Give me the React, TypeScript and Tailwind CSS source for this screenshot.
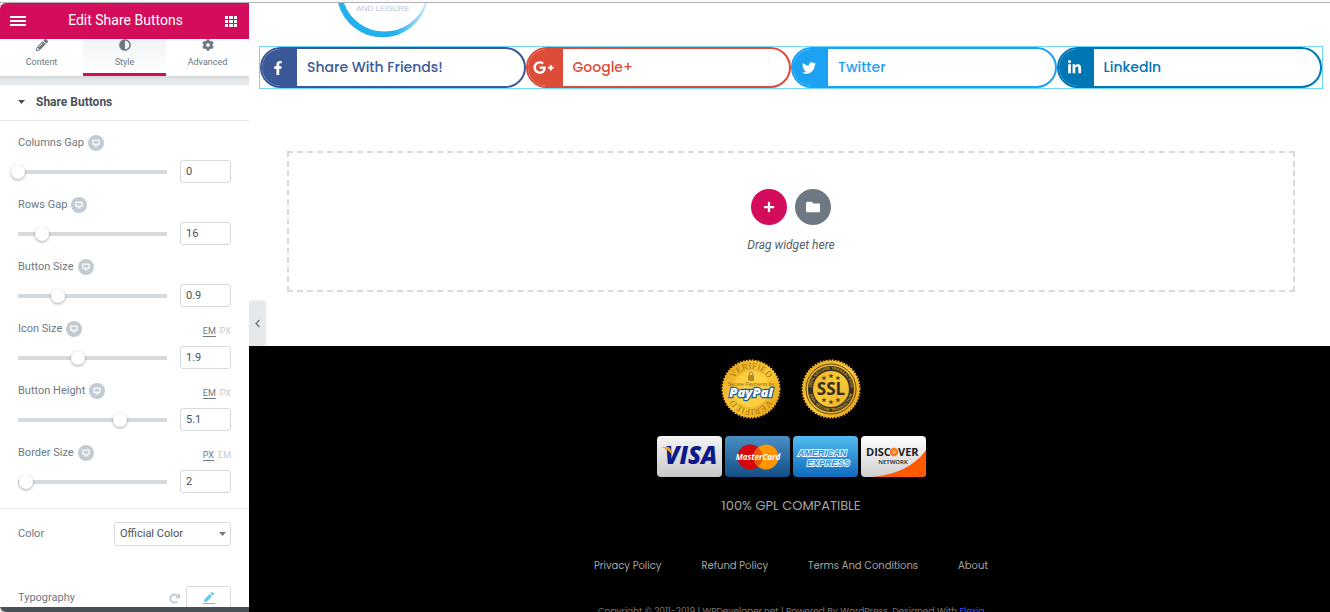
import { useState } from "react";
import type { ReactNode } from "react";
import {
  FaAdjust,
  FaChevronLeft,
  FaCog,
  FaFacebookF,
  FaFolder,
  FaGooglePlusG,
  FaLinkedinIn,
  FaPencilAlt,
  FaPlus,
  FaTwitter,
} from "react-icons/fa";

interface Control {
  id: string;
  label: string;
  value: number;
  min: number;
  max: number;
  step: number;
  units?: string[];
}

const CONTROLS: Control[] = [
  { id: "columns-gap", label: "Columns Gap", value: 0, min: 0, max: 100, step: 1 },
  { id: "rows-gap", label: "Rows Gap", value: 16, min: 0, max: 100, step: 1 },
  { id: "button-size", label: "Button Size", value: 0.9, min: 0.5, max: 2, step: 0.1 },
  { id: "icon-size", label: "Icon Size", value: 1.9, min: 0.5, max: 4, step: 0.1, units: ["EM", "PX"] },
  { id: "button-height", label: "Button Height", value: 5.1, min: 1, max: 7, step: 0.1, units: ["EM", "PX"] },
  { id: "border-size", label: "Border Size", value: 2, min: 1, max: 20, step: 1, units: ["PX", "EM"] },
];

const TABS = [
  { label: "Content", icon: <FaPencilAlt size={12} /> },
  { label: "Style", icon: <FaAdjust size={12} /> },
  { label: "Advanced", icon: <FaCog size={12} /> },
];

const NETWORKS = [
  { label: "Share With Friends!", icon: <FaFacebookF size={14} />, border: "border-[#3b5998]", bg: "bg-[#3b5998]", text: "text-[#3b5998]" },
  { label: "Google+", icon: <FaGooglePlusG size={21} />, border: "border-[#dd4b39]", bg: "bg-[#dd4b39]", text: "text-[#dd4b39]" },
  { label: "Twitter", icon: <FaTwitter size={14} />, border: "border-[#1da1f2]", bg: "bg-[#1da1f2]", text: "text-[#1da1f2]" },
  { label: "LinkedIn", icon: <FaLinkedinIn size={15} />, border: "border-[#0077b5]", bg: "bg-[#0077b5]", text: "text-[#0077b5]" },
];

const FOOTER_LINKS = ["Privacy Policy", "Refund Policy", "Terms And Conditions", "About"];

function DeviceButton() {
  return (
    <button aria-label="Desktop" className="flex size-4 shrink-0 items-center justify-center rounded-full bg-[#c2cbd2] text-white">
      <svg width="8" height="8" viewBox="0 0 8 8" fill="none" stroke="currentColor">
        <rect x="0.9" y="1.2" width="6.2" height="4" strokeWidth="1.2" />
        <path d="M2.5 6.8h3" strokeWidth="1.3" />
      </svg>
    </button>
  );
}

function SliderControl({ control }: { control: Control }) {
  const [value, setValue] = useState(String(control.value));

  return (
    <div className="flex flex-col gap-[9px]">
      <div className="flex h-4 items-center gap-1">
        <label htmlFor={control.id}>{control.label}</label>
        <DeviceButton />
        {control.units && (
          <div className="ml-auto flex gap-1 pt-1 text-[9px] leading-3 text-[#c2cbd2]">
            {control.units.map((unit, i) => (
              <button key={unit} className={i === 0 ? "text-[#6d7882] underline underline-offset-2" : ""}>
                {unit}
              </button>
            ))}
          </div>
        )}
      </div>
      <div className="-ml-[7px] flex items-center gap-[6px]">
        <input
          type="range"
          aria-label={`${control.label} slider`}
          min={control.min}
          max={control.max}
          step={control.step}
          value={Number(value)}
          onChange={(e) => setValue(e.target.value)}
          className="h-4 min-w-0 flex-1 appearance-none bg-[linear-gradient(#d5dadf,#d5dadf)] bg-[length:calc(100%-14px)_4px] bg-center bg-no-repeat [&::-webkit-slider-thumb]:size-3.5 [&::-webkit-slider-thumb]:appearance-none [&::-webkit-slider-thumb]:rounded-full [&::-webkit-slider-thumb]:bg-white [&::-webkit-slider-thumb]:shadow-[0_1px_3px_rgba(0,0,0,0.35)]"
        />
        <input
          id={control.id}
          value={value}
          onChange={(e) => setValue(e.target.value)}
          className="h-[23px] w-[51px] rounded-[3px] border border-[#d5dadf] px-[5px] text-[#495157] outline-none"
        />
      </div>
    </div>
  );
}

function Sidebar() {
  return (
    <aside className="flex w-[249px] shrink-0 flex-col overflow-hidden rounded-l-md bg-white font-['Roboto',sans-serif] text-[11px] text-[#6d7882]">
      <header className="flex h-9 shrink-0 items-center justify-between bg-[#d30c5c] pr-3 pl-2.5 text-white">
        <button aria-label="Menu">
          <svg width="16" height="12" viewBox="0 0 16 12" fill="currentColor">
            <path d="M0 1h16v2H0zM0 5h16v2H0zM0 9h16v2H0z" />
          </svg>
        </button>
        <h1 className="pb-0.5 text-[14px] leading-5">Edit Share Buttons</h1>
        <button aria-label="Widgets">
          <svg width="12" height="12" viewBox="0 0 12 12" fill="currentColor">
            <path d="M0 1h3v3H0zM4 1h4v3H4zM9 1h3v3H9zM0 5h3v3H0zM4 5h4v3H4zM9 5h3v3H9zM0 9h3v3H0zM4 9h4v3H4zM9 9h3v3H9z" />
          </svg>
        </button>
      </header>

      <nav className="z-10 grid h-[37px] shrink-0 grid-cols-3 bg-white text-[9px] leading-3 shadow-[0_1px_4px_rgba(0,0,0,0.12)]">
        {TABS.map((tab) => (
          <button
            key={tab.label}
            className={
              tab.label === "Style"
                ? "flex flex-col items-center justify-start gap-[5px] border-b-3 border-[#d30c5c] bg-linear-to-b from-[#f2f3f5] to-white"
                : "flex flex-col items-center justify-start gap-[5px] border-b-3 border-white"
            }
          >
            {tab.icon}
            {tab.label}
          </button>
        ))}
      </nav>

      <div className="h-[9px] shrink-0 bg-[#e6e9ec]" />

      <button className="flex h-9 shrink-0 items-center gap-[11px] border-b border-[#e6e9ec] px-[18px] pb-0.5 text-[12px] font-bold text-[#495157]">
        <svg width="7" height="4" viewBox="0 0 7 4" fill="currentColor">
          <path d="M0 0h7L3.500 4z" />
        </svg>
        Share Buttons
      </button>

      <div className="flex min-h-0 flex-1 flex-col overflow-hidden">
        <div className="flex shrink-0 flex-col gap-3.5 border-b border-[#e6e9ec] px-[18px] pt-3.5 pb-[15px]">
          {CONTROLS.map((control) => (
            <SliderControl key={control.id} control={control} />
          ))}
        </div>

        <div className="flex shrink-0 items-center justify-between px-[18px] pt-[13px]">
          <label htmlFor="color">Color</label>
          <div className="relative">
            <select
              id="color"
              className="h-6 w-[117px] appearance-none rounded-[3px] border border-[#d5dadf] bg-white pr-4 pl-[5px] text-[#495157] outline-none"
            >
              <option>Official Color</option>
              <option>Custom Color</option>
            </select>
            <svg width="7" height="4" viewBox="0 0 7 4" className="pointer-events-none absolute top-2.5 right-[5px] fill-[#6d7882]">
              <path d="M0 0h7L3.500 4z" />
            </svg>
          </div>
        </div>

        <div className="flex shrink-0 items-center px-[18px] pt-10">
          <span>Typography</span>
          <button aria-label="Reset typography" className="mr-1.5 ml-auto text-[#c2cbd2]">
            <svg width="11" height="11" viewBox="0 0 11 11">
              <path d="M8.300 8.300A4 4 0 1 1 8.500 3" fill="none" stroke="currentColor" strokeWidth="1.900" />
              <path d="M11 .3v4.900H6.100z" fill="currentColor" />
            </svg>
          </button>
          <button
            aria-label="Edit typography"
            className="flex h-6 w-[45px] items-center justify-center rounded-[3px] border border-[#d5dadf] text-[#5bc9f4]"
          >
            <svg width="12" height="12" viewBox="0 0 12 12" fill="currentColor">
              <path d="M1 10l.5-2.800L6.700 2l2.300 2.300L3.800 9.500zM7.400 1.300L8.500.300q.5-.4 1 0l1.200 1.200q.4.5 0 1L9.700 3.600z" />
              <path d="M0 11h12v1H0z" />
            </svg>
          </button>
        </div>
      </div>

      <div className="h-[5px] shrink-0 bg-[#495157]" />
    </aside>
  );
}

function BrandMark() {
  return (
    <svg width="100" height="37" viewBox="0 0 100 37" className="ml-[74px] block">
      <defs>
        <linearGradient id="ring" x1="0" x2="1">
          <stop offset="0" stopColor="#22b1ee" />
          <stop offset="0.65" stopColor="#22b1ee" />
          <stop offset="1" stopColor="#22b1ee" stopOpacity="0.25" />
        </linearGradient>
      </defs>
      <path d="M5-2A46 46 0 0 0 94-2L92-2A43 43 0 0 1 11-2z" fill="url(#ring)" transform="translate(0 2)" />
      <text x="50" y="8" textAnchor="middle" fontSize="8" fill="#b9c6dc" fontFamily="Liberation Sans">
        AND LEISURE
      </text>
    </svg>
  );
}

function Seal({ children }: { children: ReactNode }) {
  return (
    <svg width="60" height="60" viewBox="0 0 60 60">
      <defs>
        <linearGradient id="gold" x1="0" y1="0" x2="1" y2="1">
          <stop offset="0" stopColor="#e5a11b" />
          <stop offset="0.5" stopColor="#fccb38" />
          <stop offset="1" stopColor="#e09a16" />
        </linearGradient>
      </defs>
      <circle cx="30" cy="30" r="28.500" fill="url(#gold)" />
      <circle cx="30" cy="30" r="28.500" fill="none" stroke="#f0b429" strokeWidth="2" strokeDasharray="1.6 1.4" />
      {children}
    </svg>
  );
}

function PaypalSeal() {
  return (
    <Seal>
      <defs>
        <path id="seal-top" d="M10 30a20 20 0 0 1 40 0" />
        <path id="seal-bottom" d="M50 30a20 20 0 0 1-40 0" />
      </defs>
      <circle cx="30" cy="30" r="18" fill="#ffd84a" opacity="0.6" />
      <g fontFamily="Liberation Serif" fontSize="9" fill="#a8761a" textAnchor="middle">
        <text><textPath href="#seal-top" startOffset="50%">VERIFIED</textPath></text>
        <text><textPath href="#seal-bottom" startOffset="50%">VERIFIED</textPath></text>
      </g>
      <rect x="27" y="16" width="6" height="6" rx="1" fill="#b98a1e" />
      <path d="M28.500 16v-1.500a1.500 1.500 0 0 1 3 0V16" fill="none" stroke="#8d887a" />
      <text x="30" y="27" textAnchor="middle" fontFamily="Liberation Sans" fontSize="5" fill="#8d5f14">
        Secure Payments by
      </text>
      <text
        x="30" y="38" textAnchor="middle" fontFamily="Open Sans" fontWeight="800" fontStyle="italic" fontSize="13"
        fill="#fff" stroke="#1f5fa8" strokeWidth="2.500" paintOrder="stroke"
      >
        PayPal
      </text>
    </Seal>
  );
}

function SslSeal() {
  return (
    <Seal>
      <defs>
        <path id="ssl-top" d="M10.500 30a19.500 19.500 0 0 1 39 0" />
        <path id="ssl-bottom" d="M8 30a22 22 0 0 0 44 0" />
        <path id="star" d="M0-2.600L.7-.8 2.500-.8 1.100.4 1.600 2.200 0 1.100-1.600 2.200-1.100.4-2.500-.8-.7-.8z" />
      </defs>
      <circle cx="30" cy="30" r="25" fill="none" stroke="#5b4718" />
      <circle cx="30" cy="30" r="20.500" fill="none" stroke="#33301f" strokeWidth="5" />
      <g fontFamily="Liberation Sans" fontSize="4" fontWeight="700" fill="#c99a2c" textAnchor="middle">
        <text><textPath href="#ssl-top" startOffset="50%">100% SECURE TRANSACTION</textPath></text>
        <text><textPath href="#ssl-bottom" startOffset="50%">100% SECURE TRANSACTION</textPath></text>
      </g>
      <g fill="#4a3d18">
        <use href="#star" x="30" y="17" />
        <use href="#star" x="23" y="19" />
        <use href="#star" x="37" y="19" />
        <use href="#star" x="30" y="43" />
        <use href="#star" x="23" y="41" />
        <use href="#star" x="37" y="41" />
      </g>
      <text
        x="30" y="36" textAnchor="middle" fontFamily="Open Sans" fontWeight="700" fontSize="17"
        fill="#33301f" stroke="#f3bd35" strokeWidth="1.500" paintOrder="stroke"
      >
        SSL
      </text>
    </Seal>
  );
}

function CardBadge({ id, from, to, children }: { id: string; from: string; to: string; children: ReactNode }) {
  return (
    <svg width="65" height="41" viewBox="0 0 65 41">
      <defs>
        <linearGradient id={id} x1="0" y1="0" x2="0" y2="1">
          <stop offset="0" stopColor={from} />
          <stop offset="1" stopColor={to} />
        </linearGradient>
        <clipPath id={`${id}-clip`}>
          <rect width="65" height="41" rx="4" />
        </clipPath>
      </defs>
      <g clipPath={`url(#${id}-clip)`}>
        <rect width="65" height="41" fill={`url(#${id})`} />
        {children}
      </g>
    </svg>
  );
}

function PaymentCards() {
  return (
    <div className="flex gap-[3px]">
      <CardBadge id="visa" from="#f4f4f4" to="#c9c9cb">
        <text x="34" y="28" textAnchor="middle" fontFamily="Open Sans" fontWeight="800" fontStyle="italic" fontSize="24" fill="#0a1a8c">
          VISA
        </text>
        <path d="M4 11h7q2 0 2.500 2l1.500 6Q11 13 4 11z" fill="#f7a01d" />
      </CardBadge>
      <CardBadge id="mastercard" from="#4a8fc4" to="#124f86">
        <circle cx="25" cy="21" r="12.500" fill="#d5050c" />
        <circle cx="41" cy="21" r="12.500" fill="#ff9500" />
        <path d="M33 11.400a12.500 12.500 0 0 1 0 19.200a12.500 12.500 0 0 1 0-19.200z" fill="#e8590a" />
        <text x="33" y="24" textAnchor="middle" fontFamily="Open Sans" fontWeight="700" fontStyle="italic" fontSize="8" fill="#fff">
          MasterCard
        </text>
      </CardBadge>
      <CardBadge id="amex" from="#52bdf0" to="#0f69bd">
        <g fontFamily="Liberation Sans" fontWeight="700" fontStyle="italic" fontSize="9" fill="#2c8fd6" stroke="#e9f6ff" strokeWidth="1.800" paintOrder="stroke">
          <text x="5" y="20">AMERICAN</text>
          <text x="14" y="30">EXPRESS</text>
        </g>
      </CardBadge>
      <CardBadge id="discover" from="#ffffff" to="#cfcfcf">
        <path d="M65 14Q48 38 10 41H65z" fill="#ff5a00" />
        <g fontFamily="Open Sans" fontWeight="700" fontSize="11" fill="#1c1c1c">
          <text x="5" y="20">DISC</text>
          <text x="37" y="20">VER</text>
        </g>
        <circle cx="33" cy="16" r="4.200" fill="#ff7a1a" />
        <circle cx="33" cy="16" r="1.500" fill="#ffc08a" />
        <text x="32" y="28" textAnchor="middle" fontFamily="Open Sans" fontWeight="600" fontSize="6" fill="#1c1c1c">
          NETWORK
        </text>
      </CardBadge>
    </div>
  );
}

function Preview() {
  return (
    <main className="relative flex min-w-0 flex-1 flex-col overflow-hidden bg-white font-['Poppins','Inter',sans-serif]">
      <div className="h-[343px] shrink-0 pr-[7px] pl-2.5">
        <div className="h-[43px]">
          <BrandMark />
        </div>

        <div className="grid grid-cols-4 border border-[#71d7f7]">
          {NETWORKS.map((network) => (
            <a
              key={network.label}
              href="#share"
              className={`flex h-[41px] items-stretch overflow-hidden rounded-full border-2 ${network.border}`}
            >
              <span className={`flex w-[35px] items-center justify-center pr-[3px] text-white ${network.bg}`}>{network.icon}</span>
              <span className={`flex items-center pl-2.5 text-[14px] font-medium ${network.text}`}>{network.label}</span>
            </a>
          ))}
        </div>

        <div className="mx-7 mt-[62px] flex h-[141px] flex-col items-center border-2 border-dashed border-[#d5dadf] pt-9">
          <div className="flex gap-2 text-white">
            <button aria-label="Add section" className="flex size-9 items-center justify-center rounded-full bg-[#d30c5c]">
              <FaPlus size={12} />
            </button>
            <button aria-label="Add template" className="flex size-9 items-center justify-center rounded-full bg-[#6d7882]">
              <FaFolder size={14} />
            </button>
          </div>
          <p className="mt-3 font-['Roboto',sans-serif] text-[12px] leading-4 text-[#556068] italic">Drag widget here</p>
        </div>
      </div>

      <button
        aria-label="Hide panel"
        className="absolute top-[298px] left-0 flex h-[45px] w-4 items-center justify-center rounded-r-[3px] bg-[#e6e9ec] text-[#6d7882] shadow-[1px_0_3px_rgba(0,0,0,0.1)]"
      >
        <FaChevronLeft size={9} />
      </button>

      <footer className="flex flex-1 flex-col items-center overflow-hidden bg-black pt-[13px] pl-[3px] text-[#a5a5a5]">
        <div className="flex gap-5">
          <PaypalSeal />
          <SslSeal />
        </div>
        <div className="mt-[17px]">
          <PaymentCards />
        </div>
        <p className="mt-[19px] text-[13px] leading-5">100% GPL COMPATIBLE</p>
        <nav className="mt-[42px] flex gap-10 text-[10px] leading-4">
          {FOOTER_LINKS.map((link) => (
            <a key={link} href="#footer">
              {link}
            </a>
          ))}
        </nav>
        <p className="mt-[29px] shrink-0 text-[9px] leading-4 whitespace-nowrap text-[#777]">
          Copyright © 2011-2019 | WPDeveloper.net | Powered By WordPress. Designed With{" "}
          <a href="#flexia" className="text-[#4a4ae0]">
            Flexia
          </a>
        </p>
      </footer>
    </main>
  );
}

export default function App() {
  return (
    <div className="flex h-screen flex-col overflow-hidden bg-[#ececec]">
      <div className="h-[3px] shrink-0 border-b border-[#b0b3b5] bg-[#fafafa]" />
      <div className="flex min-h-0 flex-1">
        <Sidebar />
        <Preview />
      </div>
    </div>
  );
}
